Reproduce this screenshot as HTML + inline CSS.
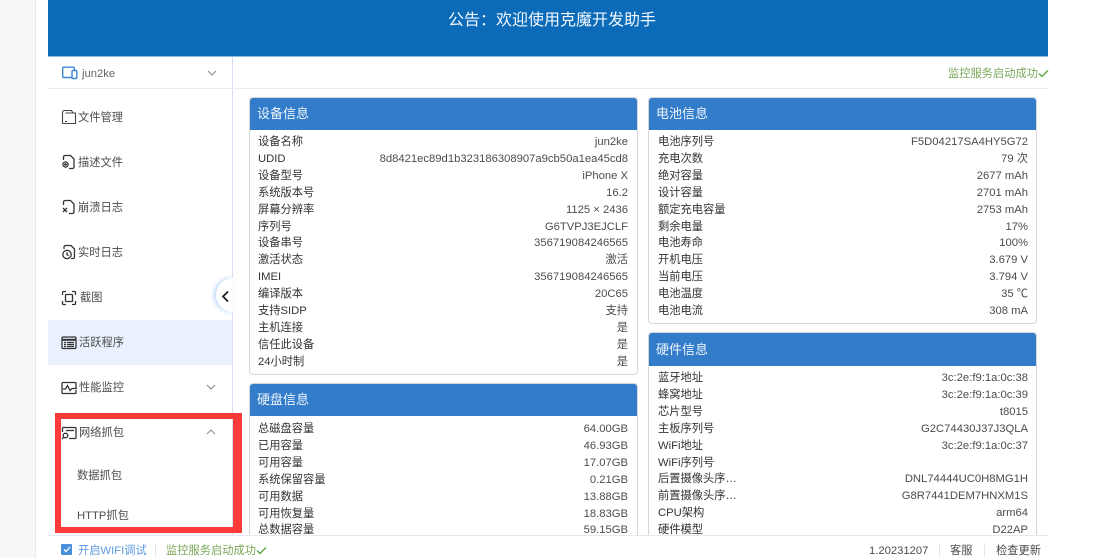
<!DOCTYPE html>
<html lang="zh">
<head>
<meta charset="utf-8">
<title>克魔开发助手</title>
<style>
*{box-sizing:border-box;margin:0;padding:0}
html,body{width:1111px;height:558px;overflow:hidden;background:#fff}
body{position:relative;font-family:"Liberation Sans","Noto Sans CJK SC",sans-serif;font-size:11.25px;color:#444;filter:blur(.3px)}
.abs{position:absolute}
.gutter{left:0;top:0;width:36px;height:558px;background:#f6f7f9;border-right:1px solid #e6e7e9}
.banner{left:48px;top:0;width:1000px;height:57px;background:#0c6bb8;border-bottom:1px solid #8fbbe2;color:#f2f7fc;font-size:16px;text-align:center;padding-top:10px;line-height:22px}
.banner span{position:relative;left:4px}
.sideline{left:232px;top:57px;width:1px;height:478px;background:#d5deee}
.hline{left:48px;top:88px;width:185px;height:1px;background:#e8ebf0}
.hline2{left:233px;top:88px;width:815px;height:1px;background:#e9ebee}
.item{left:48px;width:184px;height:45px;line-height:47px;color:#4c4c4c;white-space:nowrap}
.item svg{position:absolute;left:13px;top:15px}
.item .t{position:absolute;left:31px}
.item .t.n{left:30px}
.item .arrow{left:158px;top:19px}
.active{background:#e8f1fd}
.sub{left:77px;line-height:16px;color:#4c4c4c;white-space:nowrap}
.red{left:55px;top:413px;width:187px;height:120px;border:6px solid #fb3a3a;border-right-width:9px}
.collapse{left:216px;top:278px;width:17px;height:34px;background:#fff;border-radius:17px 0 0 17px;box-shadow:-2px 0 5px #b9d6fa}
.ok{color:#7aa85a;white-space:nowrap;line-height:16px}
.card{width:389px;background:#fff;border:1px solid #d4d6da;border-radius:4px;overflow:hidden}
.card h3{height:33px;background:#327cca;color:#eef5fc;font-weight:normal;font-size:13px;line-height:33px;padding-left:8px;margin:-1px -1px 0;border-radius:3px 3px 0 0}
.rows{padding:4px 9px 0 8px}
.rows div{height:16.92px;line-height:17px;display:flex;justify-content:space-between;white-space:nowrap}
.rows b{font-weight:normal;color:#333}
.rows i{font-style:normal;color:#4c4c4c}
.foot{left:48px;top:535px;width:1000px;height:23px;background:#fff;border-top:1px solid #e6e9f0}
.cb{left:61px;top:544px;width:11px;height:11px;background:#4b8fdb;border-radius:1px}
.ft{top:544px;line-height:15px;white-space:nowrap;color:#4c4c4c}
.sep{top:543px;width:1px;height:14px;background:#e4e6ea}
</style>
</head>
<body>
<div class="abs gutter"></div>
<div class="abs banner"><span>公告：欢迎使用克魔开发助手</span></div>
<div class="abs sideline"></div>
<div class="abs hline"></div>
<div class="abs hline2"></div>

<svg class="abs" style="left:62px;top:66px" width="16" height="14" viewBox="0 0 16 14" fill="none" stroke="#3f86d6" stroke-width="1.4"><path d="M10 11.5H1.5a.8.8 0 0 1-.8-.8V2a.8.8 0 0 1 .8-.8h10a.8.8 0 0 1 .8.8v2"/><rect x="10" y="4.500" width="4.800" height="8" rx="1"/></svg>
<div class="abs" style="left:82px;top:66px;line-height:16px;color:#666">jun2ke</div>
<svg class="abs" style="left:207px;top:70px" width="10" height="6" viewBox="0 0 10 6" fill="none" stroke="#888" stroke-width="1"><path d="M1 1l4 4 4-4"/></svg>

<div class="abs item" style="top:95px"><svg style="left:13px;top:14px" width="16" height="16" viewBox="0 0 16 16" fill="none" stroke="#444" stroke-width="1.100"><path d="M1.500 14.500V3.500a2 2 0 0 1 2-2h7l1.500 2.500M1.500 14.500h13V4H4.500"/><path d="M4 12.500h2"/></svg><span class="t n">文件管理</span></div>
<div class="abs item" style="top:140px"><svg style="left:13px;top:14px" width="16" height="16" viewBox="0 0 16 16" fill="none" stroke="#333" stroke-width="1.300"><path d="M2.500 6V3a1.500 1.500 0 0 1 1.500-1.500h5.500l3.500 3.500v8a1.500 1.500 0 0 1-1.500 1.500H8"/><circle cx="4.500" cy="10.500" r="2.600"/><circle cx="4.500" cy="10.500" r=".7"/></svg><span class="t n">描述文件</span></div>
<div class="abs item" style="top:185px"><svg style="left:13px;top:14px" width="16" height="16" viewBox="0 0 16 16" fill="none" stroke="#333" stroke-width="1.300"><path d="M2.500 6V3a1.500 1.500 0 0 1 1.500-1.500h5.500l3.500 3.500v8a1.500 1.500 0 0 1-1.500 1.500H8"/><path d="M2 9l4 4M6 9l-4 4"/></svg><span class="t n">崩溃日志</span></div>
<div class="abs item" style="top:230px"><svg style="left:13px;top:14px" width="16" height="16" viewBox="0 0 16 16" fill="none" stroke="#333" stroke-width="1.300"><path d="M3 5V3a1.500 1.500 0 0 1 1.500-1.500h5.500l3.500 3.500v8a1.500 1.500 0 0 1-1.500 1.500H10"/><circle cx="6" cy="10.500" r="4.200"/><path d="M6 8.300v2.400l1.600.9"/></svg><span class="t n">实时日志</span></div>
<div class="abs item" style="top:275px"><svg width="16" height="16" viewBox="0 0 16 16" fill="none" stroke="#333" stroke-width="1.300"><path d="M1.500 5V2.500a1 1 0 0 1 1-1H5M11 1.500h2.500a1 1 0 0 1 1 1V5M14.500 11v2.500a1 1 0 0 1-1 1H11M5 14.500H2.500a1 1 0 0 1-1-1V11"/><rect x="4.500" y="4.500" width="7" height="7" rx=".8"/></svg><span class="t" style="left:32px">截图</span></div>
<div class="abs item active" style="top:320px"><svg width="16" height="16" viewBox="0 0 16 16" fill="none" stroke="#333" stroke-width="1.300"><rect x="1" y="2" width="14" height="11.500" rx="1.200"/><path d="M1 4.800h14" stroke-width="2"/><path d="M3 7.500h2M6 7.500h7M3 9.500h2M6 9.500h7M3 11.500h2M6 11.500h7"/></svg><span class="t">活跃程序</span></div>
<div class="abs item" style="top:365px"><svg width="16" height="16" viewBox="0 0 16 16" fill="none" stroke="#333" stroke-width="1.300"><path d="M1 8V3.500a1 1 0 0 1 1-1h12a1 1 0 0 1 1 1V8M15 10v2.500a1 1 0 0 1-1 1H2a1 1 0 0 1-1-1V10"/><path d="M0 9h4.500l2-3.500 2.500 5 2-2h5"/></svg><span class="t">性能监控</span><svg class="arrow" width="10" height="6" viewBox="0 0 10 6" fill="none" stroke="#888"><path d="M1 1l4 4 4-4"/></svg></div>
<div class="abs item" style="top:410px"><svg width="16" height="16" viewBox="0 0 16 16" fill="none" stroke="#333" stroke-width="1.300"><path d="M1.500 7V3.500a1 1 0 0 1 1-1h11.500a1 1 0 0 1 1 1v9a1 1 0 0 1-1 1H8"/><path d="M5 5.500h8"/><circle cx="4.500" cy="10.500" r="2.300"/><path d="M2.800 12.300L1 14"/></svg><span class="t">网络抓包</span><svg class="arrow" width="10" height="6" viewBox="0 0 10 6" fill="none" stroke="#888"><path d="M1 5l4-4 4 4"/></svg></div>
<div class="abs sub" style="top:468px">数据抓包</div>
<div class="abs sub" style="top:508px">HTTP抓包</div>

<div class="abs collapse"></div>
<svg class="abs" style="left:221px;top:290px" width="9" height="13" viewBox="0 0 9 13" fill="none" stroke="#222" stroke-width="1.800"><path d="M7 1.500L2 6.500l5 5"/></svg>

<div class="abs ok" style="left:948px;top:66px">监控服务启动成功</div>
<svg class="abs" style="left:1038px;top:69px" width="11" height="9" viewBox="0 0 11 9" fill="none" stroke="#62a84a" stroke-width="1.500"><path d="M1 4.500l3 3 6-6"/></svg>

<div class="abs card" style="left:249px;top:97px;height:278px">
<h3>设备信息</h3>
<div class="rows">
<div><b>设备名称</b><i>jun2ke</i></div>
<div><b>UDID</b><i>8d8421ec89d1b323186308907a9cb50a1ea45cd8</i></div>
<div><b>设备型号</b><i>iPhone X</i></div>
<div><b>系统版本号</b><i>16.2</i></div>
<div><b>屏幕分辨率</b><i>1125 × 2436</i></div>
<div><b>序列号</b><i>G6TVPJ3EJCLF</i></div>
<div><b>设备串号</b><i>356719084246565</i></div>
<div><b>激活状态</b><i>激活</i></div>
<div><b>IMEI</b><i>356719084246565</i></div>
<div><b>编译版本</b><i>20C65</i></div>
<div><b>支持SIDP</b><i>支持</i></div>
<div><b>主机连接</b><i>是</i></div>
<div><b>信任此设备</b><i>是</i></div>
<div><b>24小时制</b><i>是</i></div>
</div>
</div>

<div class="abs card" style="left:249px;top:383px;height:170px">
<h3>硬盘信息</h3>
<div class="rows" style="padding-top:5px">
<div><b>总磁盘容量</b><i>64.00GB</i></div>
<div><b>已用容量</b><i>46.93GB</i></div>
<div><b>可用容量</b><i>17.07GB</i></div>
<div><b>系统保留容量</b><i>0.21GB</i></div>
<div><b>可用数据</b><i>13.88GB</i></div>
<div><b>可用恢复量</b><i>18.83GB</i></div>
<div><b>总数据容量</b><i>59.15GB</i></div>
</div>
</div>

<div class="abs card" style="left:648px;top:97px;height:227px">
<h3>电池信息</h3>
<div class="rows" style="padding-left:9px;padding-right:8px">
<div><b>电池序列号</b><i>F5D04217SA4HY5G72</i></div>
<div><b>充电次数</b><i>79 次</i></div>
<div><b>绝对容量</b><i>2677 mAh</i></div>
<div><b>设计容量</b><i>2701 mAh</i></div>
<div><b>额定充电容量</b><i>2753 mAh</i></div>
<div><b>剩余电量</b><i>17%</i></div>
<div><b>电池寿命</b><i>100%</i></div>
<div><b>开机电压</b><i>3.679 V</i></div>
<div><b>当前电压</b><i>3.794 V</i></div>
<div><b>电池温度</b><i>35 ℃</i></div>
<div><b>电池电流</b><i>308 mA</i></div>
</div>
</div>

<div class="abs card" style="left:648px;top:332px;height:221px">
<h3 style="height:34px;line-height:35px">硬件信息</h3>
<div class="rows" style="padding-left:9px;padding-right:8px">
<div><b>蓝牙地址</b><i>3c:2e:f9:1a:0c:38</i></div>
<div><b>蜂窝地址</b><i>3c:2e:f9:1a:0c:39</i></div>
<div><b>芯片型号</b><i>t8015</i></div>
<div><b>主板序列号</b><i>G2C74430J37J3QLA</i></div>
<div><b>WiFi地址</b><i>3c:2e:f9:1a:0c:37</i></div>
<div><b>WiFi序列号</b><i></i></div>
<div><b>后置摄像头序…</b><i>DNL74444UC0H8MG1H</i></div>
<div><b>前置摄像头序…</b><i>G8R7441DEM7HNXM1S</i></div>
<div><b>CPU架构</b><i>arm64</i></div>
<div><b>硬件模型</b><i>D22AP</i></div>
</div>
</div>

<div class="abs foot"></div>
<div class="abs cb"></div>
<svg class="abs" style="left:63px;top:546px" width="8" height="7" viewBox="0 0 8 7" fill="none" stroke="#fff" stroke-width="1.300"><path d="M1 3.500l2 2 4-4.500"/></svg>
<div class="abs ft" style="left:78px;color:#5c9ae0">开启WIFI调试</div>
<div class="abs sep" style="left:155px"></div>
<div class="abs ft ok" style="left:166px;line-height:15px;color:#7aa85a">监控服务启动成功</div>
<svg class="abs" style="left:256px;top:546px" width="11" height="9" viewBox="0 0 11 9" fill="none" stroke="#62a84a" stroke-width="1.500"><path d="M1 4.500l3 3 6-6"/></svg>
<div class="abs ft" style="left:869px">1.20231207</div>
<div class="abs sep" style="left:939px"></div>
<div class="abs ft" style="left:950px">客服</div>
<div class="abs sep" style="left:984px"></div>
<div class="abs ft" style="left:996px">检查更新</div>

<div class="abs red"></div>
</body>
</html>
